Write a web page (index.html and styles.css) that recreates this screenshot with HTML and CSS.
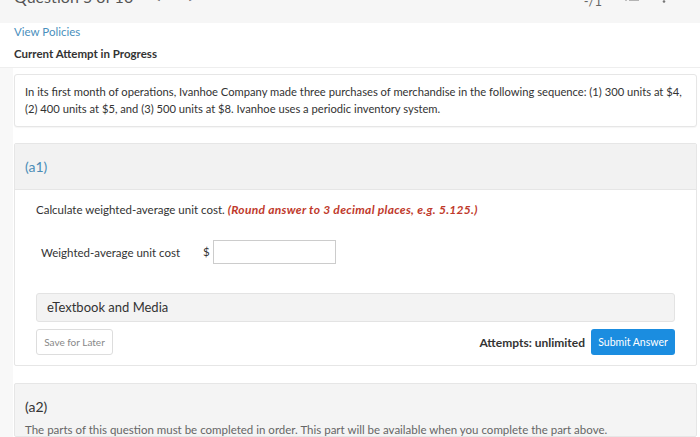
FILE: index.html
```html
<!DOCTYPE html>
<html>
<head>
<meta charset="utf-8">
<link rel="stylesheet" href="styles.css">
</head>
<body>
<div class="topbar">
  <div class="tb-left">
    <span class="qtitle">Question 5 of 10</span>
    <span class="chev">&lt;</span>
    <span class="chev chev-r">&gt;</span>
  </div>
  <div class="tb-right">
    <span class="score">-/1</span>
    <svg class="listicon" width="16" height="12" viewBox="0 0 16 12"><g stroke="#888" stroke-width="1.2"><line x1="1" y1="1" x2="3" y2="1"/><line x1="5" y1="1" x2="15" y2="1"/><line x1="1" y1="5" x2="3" y2="5"/><line x1="5" y1="5" x2="15" y2="5"/></g></svg>
    <svg class="kebab" width="4" height="12" viewBox="0 0 4 12"><circle cx="2" cy="1.5" r="1.3" fill="#777"/><circle cx="2" cy="6.5" r="1.3" fill="#777"/></svg>
  </div>
</div>
<div class="header">
  <a class="policies">View Policies</a>
  <div class="attempt">Current Attempt in Progress</div>
</div>
<div class="content">
  <div class="qbox">In its first month of operations, Ivanhoe Company made three purchases of merchandise in the following sequence: (1) 300 units at $4, (2) 400 units at $5, and (3) 500 units at $8. Ivanhoe uses a periodic inventory system.</div>

  <div class="part">
    <div class="part-head">(a1)</div>
    <div class="part-body">
      <div class="instr">Calculate weighted-average unit cost. <em class="round">(Round answer to 3 decimal places, e.g. 5.125.)</em></div>
      <div class="row">
        <span class="label">Weighted-average unit cost</span>
        <span class="dollar">$</span>
        <span class="input"></span>
      </div>
      <div class="etext">eTextbook and Media</div>
      <div class="actions">
        <button class="save">Save for Later</button>
        <div class="right">
          <span class="attempts">Attempts: unlimited</span>
          <button class="submit">Submit Answer</button>
        </div>
      </div>
    </div>
  </div>

  <div class="part locked">
    <div class="locked-title">(a2)</div>
    <div class="locked-text">The parts of this question must be completed in order. This part will be available when you complete the part above.</div>
  </div>
</div>
</body>
</html>
```
FILE: styles.css
```css
* { box-sizing: border-box; }
html, body { margin: 0; padding: 0; }
body {
  font-family: Lato, "Open Sans", Arial, sans-serif;
  color: #333;
  background: #fff;
  width: 700px;
  height: 437px;
  overflow: hidden;
}
.topbar {
  height: 23px;
  background: #f6f6f6;
  display: flex;
  justify-content: space-between;
  align-items: flex-start;
  overflow: hidden;
}
.tb-left {
  display: flex;
  align-items: flex-start;
  margin-top: -12px;
  padding-left: 14px;
  color: #555;
}
.qtitle { font-size: 16px; line-height: 18px; }
.chev { font-size: 16px; line-height: 18px; margin-left: 19px; color: #666; }
.chev-r { margin-left: 26px; }
.tb-right {
  display: flex;
  align-items: flex-start;
  margin-top: -5px;
  padding-right: 34px;
}
.score { font-size: 13px; line-height: 12px; color: #666; margin-right: 22px; }
.listicon { margin-right: 22px; }
.header {
  padding: 1px 14px 0;
  height: 45px;
  border-bottom: 1px solid #eee;
}
.policies {
  display: block;
  color: #4a8fbd;
  font-size: 11.5px;
  line-height: 16px;
}
.attempt {
  font-weight: bold;
  font-size: 11.5px;
  line-height: 16px;
  margin-top: 6px;
  color: #333;
}
.content {
  padding: 6px 3px 0 14px;
  box-shadow: inset 13px 0 0 #f8f8f8;
}
.qbox {
  border: 1px solid #e6e6e6;
  border-radius: 3px;
  padding: 8px 6px 9px 10px;
  font-size: 11.2px;
  line-height: 17px;
  color: #333;
  background: #fff;
  box-shadow: 0 1px 1px rgba(0,0,0,0.04);
}
.part {
  margin-top: 16px;
  border: 1px solid #e6e6e6;
  border-radius: 2px;
  background: #fff;
}
.part-head {
  background: #f2f2f2;
  height: 46px;
  border-bottom: 1px solid #e6e6e6;
  color: #4a8db7;
  font-size: 14px;
  line-height: 46px;
  padding-left: 10px;
}
.part-body {
  padding: 12px 21px 10px 21px;
}
.instr { font-size: 11.5px; line-height: 16px; }
.round { color: #c0392b; font-weight: bold; font-style: italic; font-size: 12px; letter-spacing: 0.3px; }
.row {
  display: flex;
  align-items: center;
  margin-top: 22px;
  padding-left: 5px;
}
.label { font-size: 11.5px; width: 162px; }
.dollar { font-size: 11.5px; width: 10px; margin-top: -2px; }
.input {
  display: block;
  width: 123px;
  height: 24px;
  border: 1px solid #ccc;
  background: #fff;
}
.etext {
  margin-top: 29px;
  height: 29px;
  background: #f3f3f3;
  border: 1px solid #e3e3e3;
  border-radius: 3px;
  font-size: 13px;
  line-height: 27px;
  padding-left: 10px;
  color: #333;
}
.actions {
  margin-top: 7px;
  display: flex;
  justify-content: space-between;
  align-items: center;
}
.right { display: flex; align-items: center; }
button { font-family: inherit; cursor: pointer; }
.save {
  height: 26px;
  width: 77px;
  padding: 0;
  border: 1px solid #ddd;
  border-radius: 3px;
  background: #fff;
  color: #888;
  font-size: 10px;
}
.attempts { font-weight: bold; font-size: 12px; margin-right: 6px; }
.submit {
  height: 26px;
  width: 84px;
  padding: 0;
  border: none;
  border-radius: 3px;
  background: #1b8de0;
  color: #fff;
  font-size: 10.5px;
}
.locked {
  margin-top: 17px;
  background: #f4f4f4;
  padding: 15px 10px 0;
  height: 54px;
}
.locked-title { font-size: 14px; line-height: 16px; color: #333; }
.locked-text { margin-top: 7px; font-size: 11.5px; line-height: 16px; color: #666; }
```
